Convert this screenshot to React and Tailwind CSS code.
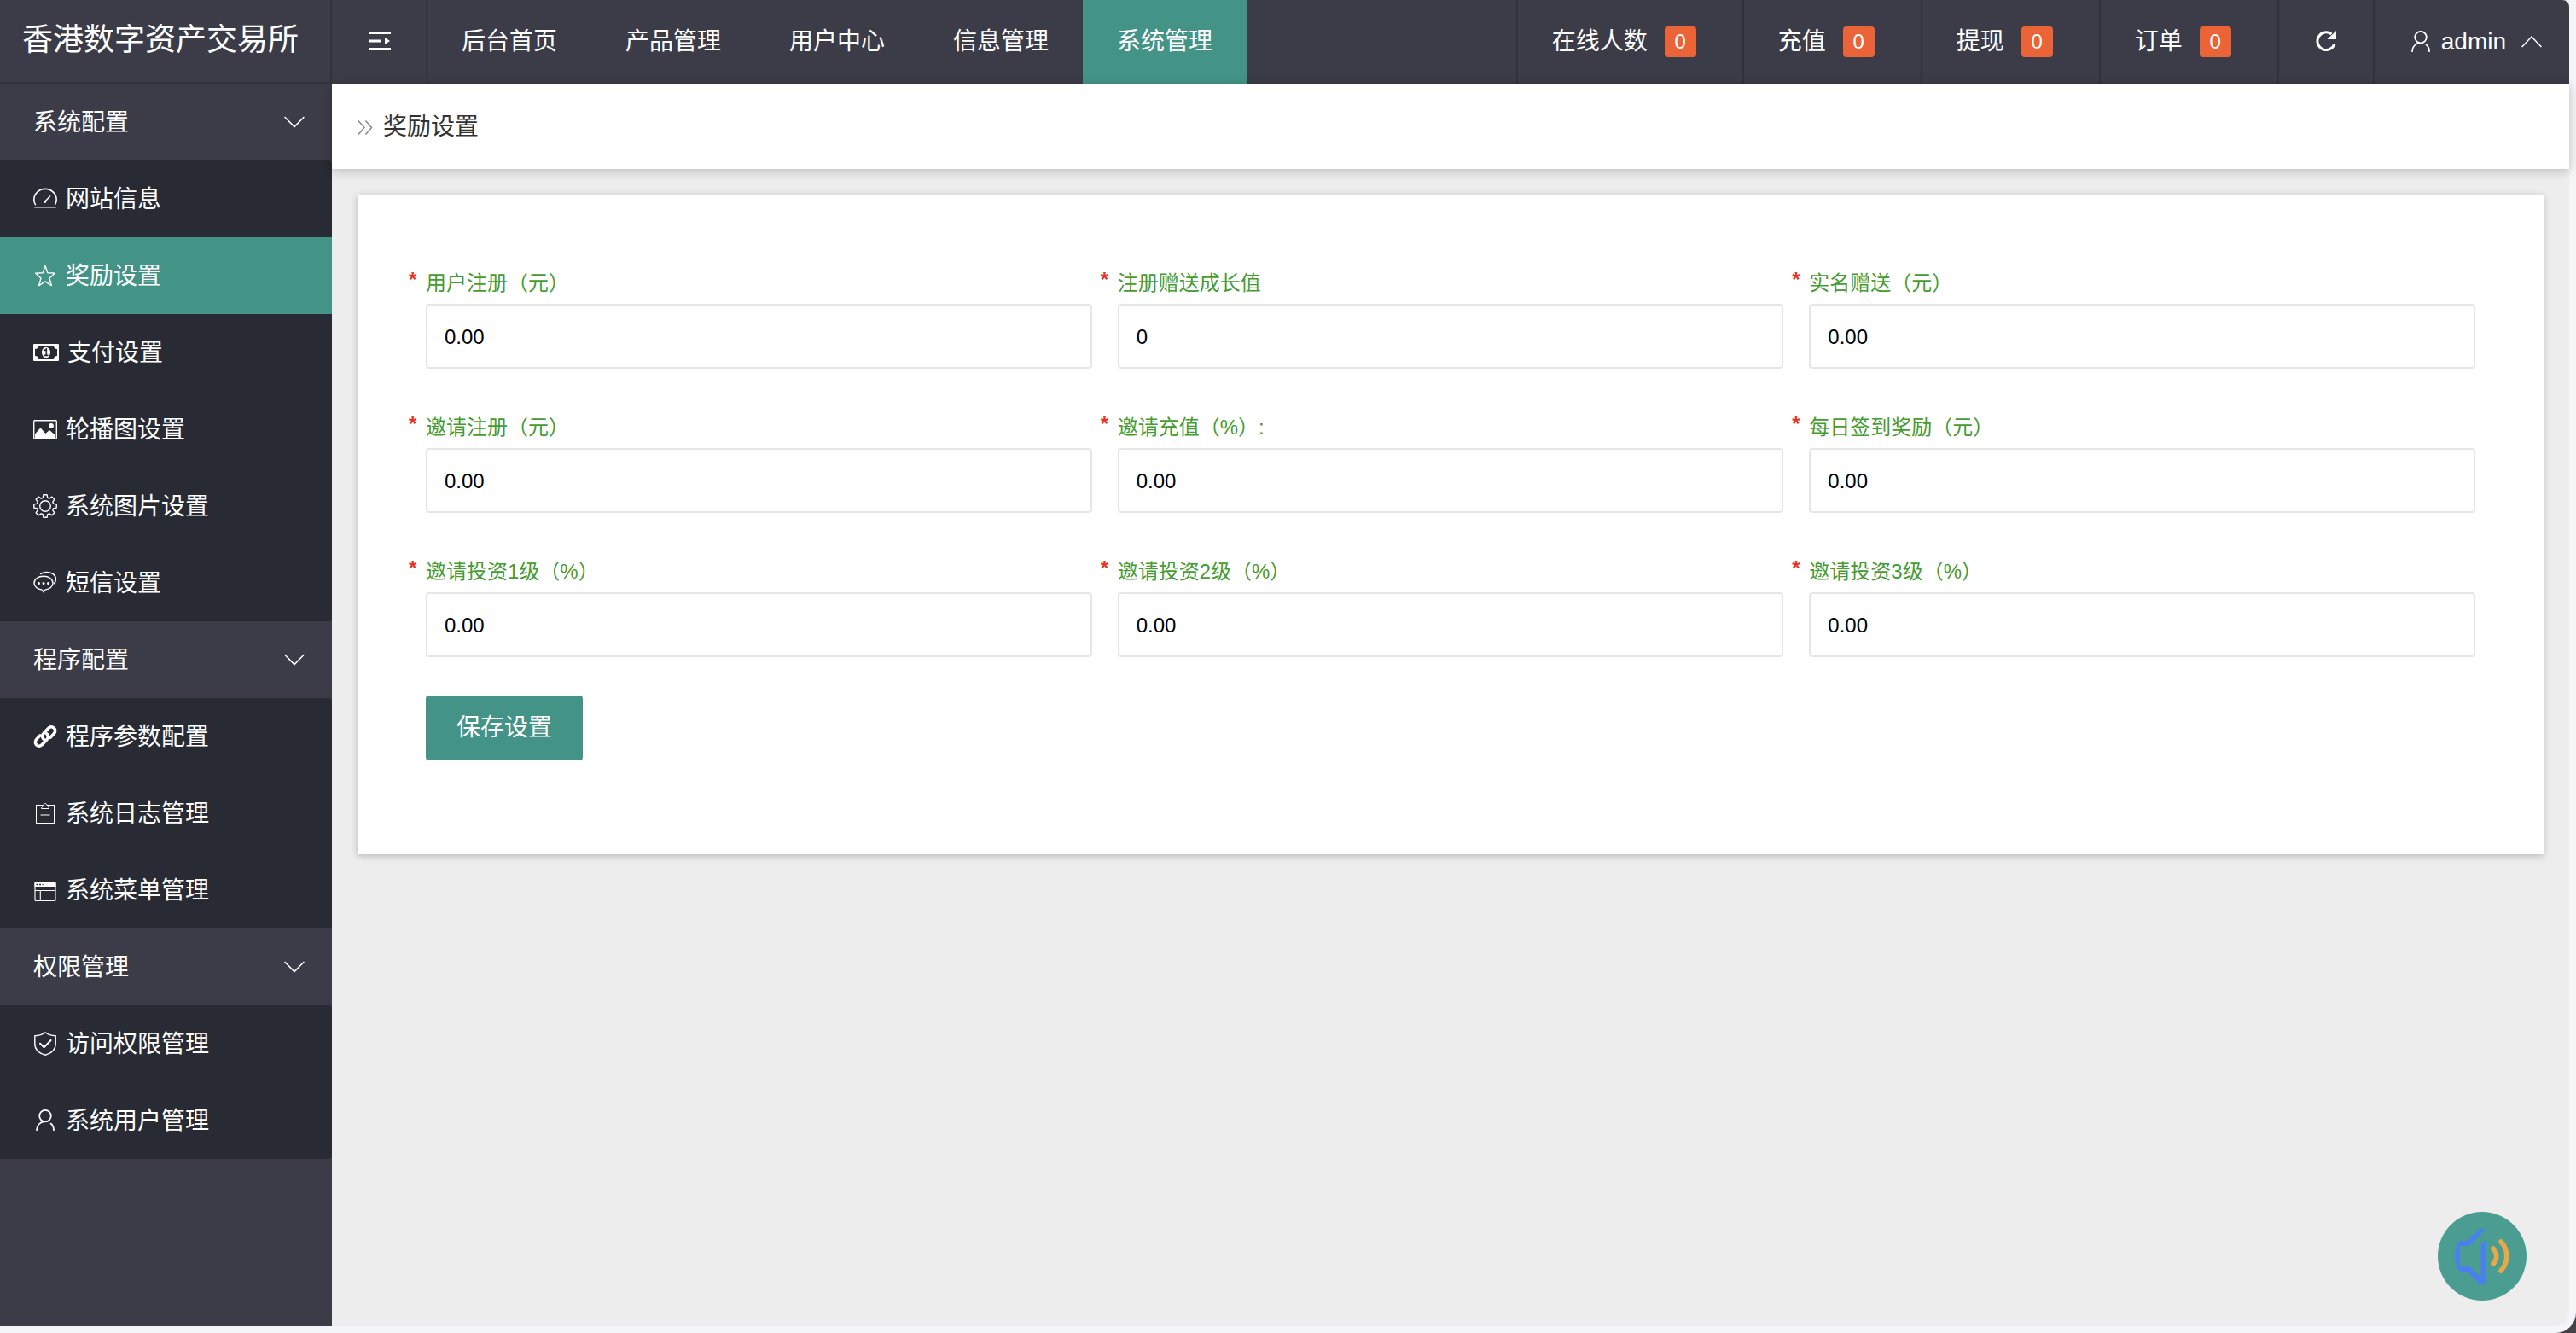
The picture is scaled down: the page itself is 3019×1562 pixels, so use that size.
import { useState } from "react";

const icons = {
  gauge: (
    <g fill="none" stroke="currentColor" strokeWidth="1.6" strokeLinecap="round">
      <path d="M2.4 20.6C1.3 18.9.8 17 .8 15.1a13.2 12.7 0 0 1 26.4 0c0 1.9-.5 3.8-1.6 5.5" />
      <path d="M13.6 17.2L19.6 11" />
      <circle cx="13.7" cy="17.3" r=".8" fill="currentColor" />
      <path d="M1.8 23.8h24.5" />
    </g>
  ),
  star: (
    <path
      d="M14 2.6l2.9 8.1 8.5.4-6.4 5.8 2.3 8.7L14 20.9l-7.3 4.7L9 16.9l-6.4-5.8 8.5-.4z"
      fill="none"
      stroke="currentColor"
      strokeWidth="1.4"
      strokeLinejoin="round"
    />
  ),
  image: (
    <g>
      <rect x=".7" y="3.7" width="26.6" height="21.6" rx="1" fill="none" stroke="currentColor" strokeWidth="1.4" />
      <circle cx="21" cy="10" r="2.9" fill="currentColor" />
      <path d="M2 23v-3.5l6.5-7.2 5.8 6.6 4.7-4 7 6V25H2z" fill="currentColor" />
    </g>
  ),
  gear: (
    <g fill="none" stroke="currentColor" strokeWidth="1.4" strokeLinejoin="round">
      <circle cx="14" cy="14" r="6.3" />
      <path d="M11.9.8h4.2l.7 3.5 2 .9 3.1-2 2.9 2.9-2 3.1.9 2 3.5.7v4.2l-3.5.7-.9 2 2 3.1-2.9 2.9-3.1-2-2 .9-.7 3.5h-4.2l-.7-3.5-2-.9-3.1 2-2.9-2.9 2-3.1-.9-2-3.5-.7v-4.2l3.5-.7.9-2-2-3.1 2.9-2.9 3.1 2 2-.9z" />
    </g>
  ),
  chat: (
    <g fill="none" stroke="currentColor" strokeWidth="1.4" strokeLinecap="round" strokeLinejoin="round">
      <path d="M12 6.2c6.2 0 11 3.5 11 8 0 4.2-4 7.4-9.2 7.9L12 25l-1.8-2.9C5 21.6 1 18.4 1 14.2c0-4.5 4.8-8 11-8z" />
      <path d="M8.5 3.6C10.5 2.2 13.2 1.5 16 1.5c6 0 10.5 3.6 10.5 8.2 0 2.2-.8 3.7-2.1 5" />
      <g fill="currentColor" stroke="none">
        <circle cx="6.5" cy="14.5" r="1.5" />
        <circle cx="12" cy="14.5" r="1.5" />
        <circle cx="17.5" cy="14.5" r="1.5" />
      </g>
    </g>
  ),
  // two identical rounded loops that overlap in the middle
  link: (
    <g fill="none" stroke="currentColor" strokeWidth="3.6" strokeLinecap="round">
      <path d="M12.2 17.2c-2-2.2-1.8-5 0-7l5.4-5.8c2-2.100 4.700-2.100 6.600-.4 1.900 1.900 1.900 4.600.1 6.600l-4.300 4.600" />
      <path d="M15.800 10.800c2 2.200 1.800 5 0 7l-5.400 5.800c-2 2.100-4.700 2.100-6.600.4-1.900-1.900-1.900-4.600-.1-6.600l4.300-4.600" />
    </g>
  ),
  clipboard: (
    <g fill="none" stroke="currentColor" strokeWidth="1">
      <rect x="3.5" y="4.5" width="21" height="21" />
      <path d="M9.500 8.500c0-2 2-2 2.500-4 .3-2.600 3.700-2.600 4 0 .5 2 2.500 2 2.500 4z" fill="#282b33" />
      <path d="M8.500 12.500h11M8.500 16h11M8.500 19.500h7" strokeWidth="1.2" />
    </g>
  ),
  window: (
    <g fill="none" stroke="currentColor" strokeWidth="1.1">
      <rect x="2" y="5.500" width="24" height="21" rx="1" />
      <path d="M2 5.500h24v4H2z" fill="currentColor" />
      <path d="M2 14.500h24M8.300 14.500v12" />
      <path d="M3.500 7.500h8" stroke="#282b33" strokeWidth="1.6" strokeDasharray="2 1.5" />
    </g>
  ),
  shield: (
    <g fill="none" stroke="currentColor" strokeLinecap="round" strokeLinejoin="round">
      <path d="M14 .8c3.4 2.700 7.600 3.800 12.200 4v9c0 6.600-4.700 11.400-12.200 13.400C6.500 25.200 1.800 20.400 1.800 13.800v-9C6.400 4.600 10.600 3.500 14 .8z" strokeWidth="1.4" />
      <path d="M8 13.800l4.600 4.400 8-8.200" strokeWidth="2" />
    </g>
  ),
  user: (
    <g fill="none" stroke="currentColor" strokeWidth="1.8" strokeLinecap="round">
      <circle cx="14" cy="8.600" r="6.800" />
      <path d="M4 25.200c.4-5.300 3.700-9.200 8.300-9.800M20.500 17.600c2.200 1.600 3.400 4.300 3.500 7.600" />
    </g>
  ),
};

const Icon = ({ name }) => (
  <svg className="size-7 shrink-0" viewBox="0 0 28 28" aria-hidden="true">
    {icons[name]}
  </svg>
);

const MoneyIcon = () => (
  <svg className="h-7 w-[30px] shrink-0" viewBox="0 0 30 28" aria-hidden="true">
    <path
      fill="currentColor"
      fillRule="evenodd"
      d="M1 4h28a1 1 0 0 1 1 1v18a1 1 0 0 1-1 1H1a1 1 0 0 1-1-1V5a1 1 0 0 1 1-1zM6 6a4 4 0 0 1-4 4v8a4 4 0 0 1 4 4h18a4 4 0 0 1 4-4v-8a4 4 0 0 1-4-4z"
    />
    <ellipse cx="15" cy="14" rx="5" ry="6.3" fill="currentColor" />
    <path d="M13 11.8l2.300-1.600v7M12.800 17.300h4.700" fill="none" stroke="#282b33" strokeWidth="1.7" />
  </svg>
);

const Chevron = ({ up }) => (
  <svg className="h-[14px] w-6" viewBox="0 0 24 14" fill="none" stroke="currentColor" strokeWidth="1.5" aria-hidden="true">
    <path d={up ? "M.6 13L12 1l11.400 12" : "M.6 1L12 12.600 23.400 1"} />
  </svg>
);

const groups = [
  {
    title: "系统配置",
    items: [
      { icon: "gauge", text: "网站信息" },
      { icon: "star", text: "奖励设置" },
      { icon: "money", text: "支付设置" },
      { icon: "image", text: "轮播图设置" },
      { icon: "gear", text: "系统图片设置" },
      { icon: "chat", text: "短信设置" },
    ],
  },
  {
    title: "程序配置",
    items: [
      { icon: "link", text: "程序参数配置" },
      { icon: "clipboard", text: "系统日志管理" },
      { icon: "window", text: "系统菜单管理" },
    ],
  },
  {
    title: "权限管理",
    items: [
      { icon: "shield", text: "访问权限管理" },
      { icon: "user", text: "系统用户管理" },
    ],
  },
];

const tabs = ["后台首页", "产品管理", "用户中心", "信息管理", "系统管理"];

const counters = [
  { text: "在线人数", count: 0 },
  { text: "充值", count: 0 },
  { text: "提现", count: 0 },
  { text: "订单", count: 0 },
];

const fields = [
  { id: "reg", label: "用户注册（元）", value: "0.00" },
  { id: "growth", label: "注册赠送成长值", value: "0" },
  { id: "realname", label: "实名赠送（元）", value: "0.00" },
  { id: "invite-reg", label: "邀请注册（元）", value: "0.00" },
  { id: "invite-pay", label: "邀请充值（%）:", value: "0.00" },
  { id: "sign", label: "每日签到奖励（元）", value: "0.00" },
  { id: "level1", label: "邀请投资1级（%）", value: "0.00" },
  { id: "level2", label: "邀请投资2级（%）", value: "0.00" },
  { id: "level3", label: "邀请投资3级（%）", value: "0.00" },
];

const Sidebar = ({ active, onSelect }) => (
  <aside className="w-[389px] shrink-0 bg-[#3b3c48]">
    <div className="flex h-[98px] items-center border-r-2 border-b-2 border-[#31323c] pb-0.5 pl-[26px] text-[36px]">
      香港数字资产交易所
    </div>
    <nav>
      {groups.map((group) => (
        <div key={group.title}>
          <button type="button" className="flex h-[90px] w-full items-center justify-between pr-8 pl-[39px]">
            <span className="pt-0.5">{group.title}</span>
            <Chevron />
          </button>
          <ul className="overflow-hidden rounded-r bg-[#282b33]">
            {group.items.map((item) => (
              <li key={item.text}>
                <a
                  href="#"
                  onClick={() => onSelect(item.text)}
                  className={`flex h-[90px] items-center gap-[10px] pl-[39px] ${active === item.text ? "bg-[#439487]" : ""}`}
                >
                  {item.icon === "money" ? <MoneyIcon /> : <Icon name={item.icon} />}
                  <span className="pt-0.5">{item.text}</span>
                </a>
              </li>
            ))}
          </ul>
        </div>
      ))}
    </nav>
  </aside>
);

const Header = () => (
  <header className="flex h-[98px] items-stretch rounded-tr-lg bg-[#3b3c48]">
    <button type="button" aria-label="收起菜单" className="flex w-28 items-center justify-center border-r-2 border-[#31323c] pb-0.5 pl-0.5">
      <svg className="h-6 w-[26px]" viewBox="0 0 26 24" aria-hidden="true">
        <path d="M0 2.500h26M0 12h15M0 21.500h26" stroke="currentColor" strokeWidth="2.8" />
        <path d="M19 8l6 4-6 4z" fill="currentColor" />
      </svg>
    </button>
    <nav className="flex">
      {tabs.map((tab) => (
        <a
          key={tab}
          href="#"
          className={`flex items-center px-10 ${tab === "系统管理" ? "bg-[#439487]" : ""}`}
        >
          {tab}
        </a>
      ))}
    </nav>
    <div className="ml-auto flex border-l-2 border-[#31323c]">
      {counters.map((item) => (
        <a key={item.text} href="#" className="flex items-center gap-5 border-r-2 border-[#31323c] pr-[54px] pl-10">
          <span>{item.text}</span>
          <span className="flex h-9 w-[37px] items-center justify-center rounded bg-[#eb6437] text-[24px]">
            {item.count}
          </span>
        </a>
      ))}
      <button type="button" aria-label="刷新" className="flex w-28 items-center justify-center border-r-2 border-[#31323c] pb-0.5">
        <svg className="h-6 w-6" viewBox="0 0 24 24" aria-hidden="true">
          <path d="M22 15.500A10.300 10.300 0 1 1 18.500 4" fill="none" stroke="currentColor" strokeWidth="3" />
          <path d="M24 0v10H13.500z" fill="currentColor" />
        </svg>
      </button>
      <button type="button" className="flex items-center pr-8 pl-10">
        <Icon name="user" />
        <span className="pr-[18px] pl-[10px]">admin</span>
        <Chevron up />
      </button>
    </div>
  </header>
);

const Field = ({ id, label, value }) => (
  <div>
    <label htmlFor={id} className="relative block pb-2 text-[24px] leading-8 text-[#479c31]">
      <span className="absolute -top-1 -left-5 font-bold text-[#eb3323]">*</span>
      {label}
    </label>
    <input
      id={id}
      type="text"
      defaultValue={value}
      className="h-[76px] w-full rounded border-2 border-[#e6e6e6] bg-white px-5 pt-0.5 text-[24px] text-black outline-none"
    />
  </div>
);

export default function App() {
  const [active, setActive] = useState("奖励设置");

  return (
    <div className="min-h-screen bg-[#444245] font-['Liberation_Sans','Noto_Sans_CJK_SC',sans-serif] text-[28px] leading-10 text-white">
      <div className="flex min-h-screen rounded-br-3xl bg-[#f4f5f8] pr-2 pb-2">
        <Sidebar active={active} onSelect={setActive} />
        <div className="relative flex min-w-0 flex-1 flex-col rounded-br-2xl bg-[#ededed]">
          <Header />
          <div className="flex h-[100px] items-center gap-3 bg-white pt-0.5 pl-[30px] text-[#333] shadow-[0_2px_12px_rgba(0,0,0,0.22)]">
            <svg className="h-5 w-[18px]" viewBox="0 0 18 20" fill="none" stroke="#888" strokeWidth="1.5" aria-hidden="true">
              <path d="M1 2.500l7 8-7 8M9.500 2.500l7 8-7 8" />
            </svg>
            <span>奖励设置</span>
          </div>
          <main className="p-[30px]">
            <form className="bg-white px-20 pt-[88px] pb-[110px] shadow-[0_2px_8px_rgba(0,0,0,0.22)]">
              <div className="grid grid-cols-3 gap-x-[30px] gap-y-[53px]">
                {fields.map((field) => (
                  <Field key={field.id} {...field} />
                ))}
              </div>
              <button type="button" className="mt-[45px] flex h-[76px] items-center rounded bg-[#439487] px-9">
                保存设置
              </button>
            </form>
          </main>
          <button
            type="button"
            aria-label="声音"
            className="absolute right-[50px] bottom-[30px] flex size-[104px] items-center justify-center rounded-full bg-[#4b9d92]"
          >
            <svg className="size-16" viewBox="0 0 64 64" fill="none" aria-hidden="true">
              <path
                d="M5 14h9L28 .8C29 0 30 0 31 0h2c2 0 2.500 1.500 1.500 2.500L18 18.500c-.7.700-1.300 1.500-2.500 1.500H6v24h10c1 0 2 .5 2.700 1.200L30.500 57V18l6-5.500V60c0 2.500-1.500 4-4 4H30c-1 0-2-.3-2.700-1L14 50H5C-1.500 39-1.500 25 5 14z"
                fill="#4a80ec"
              />
              <path d="M45 23c5 5 5 13 0 18M54 15c9 9 9 25 0 34" stroke="#e9a944" strokeWidth="5.6" strokeLinecap="round" />
            </svg>
          </button>
        </div>
      </div>
    </div>
  );
}
